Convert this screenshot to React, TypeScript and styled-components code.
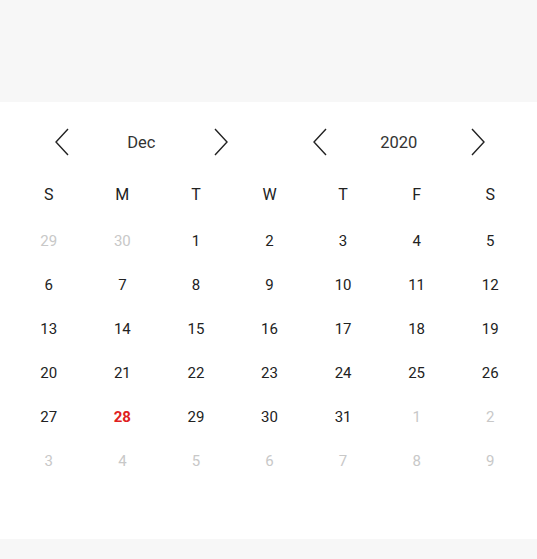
import { createGlobalStyle } from "styled-components";
import styled from "styled-components";

const GlobalStyle = createGlobalStyle`
	html, body {
		margin: 0;
		padding: 0;
		background: #f7f7f7;
		font-family: Roboto, "Liberation Sans", sans-serif;
	}
`;

const Page = styled.div`
	display: flex;
	flex-direction: column;
	min-height: 559px;
	background: #f7f7f7;
`;

const TopSpace = styled.div`
	height: 102px;
`;

const Panel = styled.section`
	padding: 18px 10px 56px 12px;
	background: #fff;
`;

const Header = styled.div`
	display: grid;
	grid-template-columns: 1fr 1fr;
	height: 44px;
	margin-bottom: 11px;
`;

const Picker = styled.div`
	display: flex;
	align-items: center;
	justify-content: space-between;
	padding: 0 35px 0 36px;
`;

const ArrowButton = styled.button`
	display: inline-flex;
	align-items: center;
	justify-content: center;
	width: 28px;
	height: 32px;
	padding: 0;
	color: #222;
	background: none;
	border: 0;
	cursor: pointer;
`;

const PickerLabel = styled.span`
	font-size: 16.5px;
	color: #333;
`;

const Grid = styled.div`
	display: grid;
	grid-template-columns: repeat(7, 1fr);
	grid-auto-rows: 44px;
`;

const WeekDay = styled.div`
	display: flex;
	align-items: center;
	justify-content: center;
	margin-bottom: 5px;
	font-size: 16px;
	color: #222;
`;

const Day = styled.div<{ $muted?: boolean; $today?: boolean }>`
	display: flex;
	align-items: center;
	justify-content: center;
	font-size: 15px;
	font-weight: ${({ $today }) => ($today ? 700 : 400)};
	color: ${({ $muted, $today }) => ($today ? "#e02020" : $muted ? "#c8c8c8" : "#222")};
`;

function Chevron({ dir }: { dir: "left" | "right" }) {
	return (
		<svg width="16" height="28" viewBox="0 0 16 28" fill="none">
			<path
				d={dir === "left" ? "M14 1 L2 14 L14 27" : "M2 1 L14 14 L2 27"}
				stroke="currentColor"
				strokeWidth="1.4"
			/>
		</svg>
	);
}

const weekDays = ["S", "M", "T", "W", "T", "F", "S"];

const days: { n: number; muted?: boolean; today?: boolean }[] = [
	{ n: 29, muted: true },
	{ n: 30, muted: true },
	...Array.from({ length: 31 }, (_, i) => ({ n: i + 1, today: i + 1 === 28 })),
	...Array.from({ length: 9 }, (_, i) => ({ n: i + 1, muted: true })),
];

export default function App() {
	return (
		<Page>
			<GlobalStyle />
			<TopSpace />
			<Panel>
				<Header>
					<Picker>
						<ArrowButton aria-label="Previous month">
							<Chevron dir="left" />
						</ArrowButton>
						<PickerLabel>Dec</PickerLabel>
						<ArrowButton aria-label="Next month">
							<Chevron dir="right" />
						</ArrowButton>
					</Picker>
					<Picker>
						<ArrowButton aria-label="Previous year">
							<Chevron dir="left" />
						</ArrowButton>
						<PickerLabel>2020</PickerLabel>
						<ArrowButton aria-label="Next year">
							<Chevron dir="right" />
						</ArrowButton>
					</Picker>
				</Header>
				<Grid>
					{weekDays.map((d, i) => (
						<WeekDay key={i}>{d}</WeekDay>
					))}
					{days.map((d, i) => (
						<Day key={i} $muted={d.muted} $today={d.today}>
							{d.n}
						</Day>
					))}
				</Grid>
			</Panel>
		</Page>
	);
}
